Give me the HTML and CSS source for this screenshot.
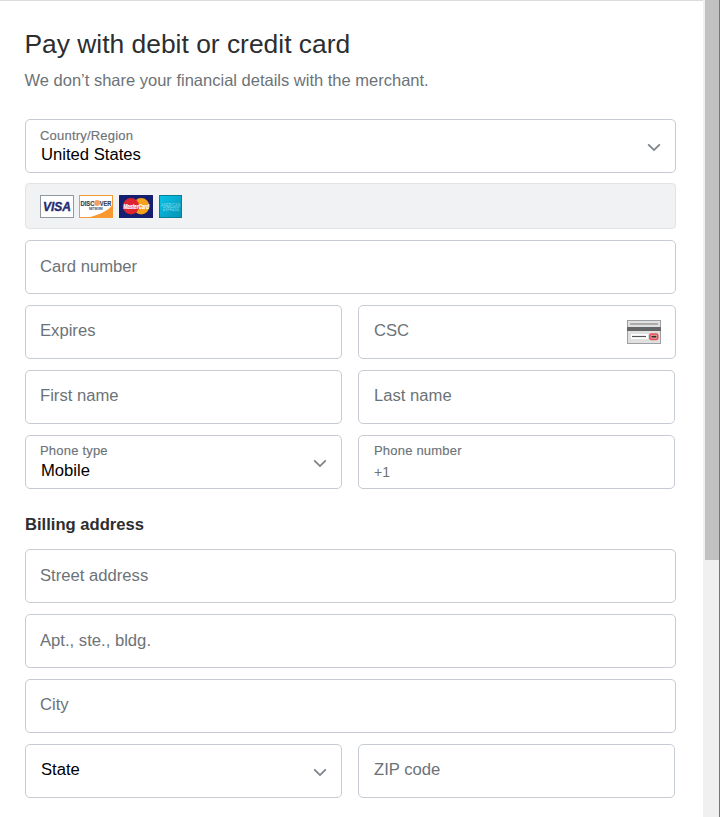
FILE: index.html
```html
<!DOCTYPE html>
<html lang="en">
<head>
<meta charset="utf-8">
<title>Pay with debit or credit card</title>
<link rel="stylesheet" href="styles.css">
</head>
<body>
<div class="window">
  <main class="page">
    <h1 class="title">Pay with debit or credit card</h1>
    <p class="subtitle">We don’t share your financial details with the merchant.</p>
    <form class="form">
      <div class="field select">
        <div class="stack"><span class="label">Country/Region</span><span class="value">United States</span></div>
        <svg class="chevron" viewBox="0 0 14 9"><path d="M1.2 1.3 7 7.1l5.8-5.8"/></svg>
      </div>
      <div class="brands">
        <svg class="card" width="34" height="23" viewBox="0 0 34 23">
          <rect x=".5" y=".5" width="33" height="22" fill="#fff" stroke="#9098a3"/>
          <text x="3" y="16" class="visa" textLength="28" lengthAdjust="spacingAndGlyphs">VISA</text>
        </svg>
        <svg class="card" width="34" height="23" viewBox="0 0 34 23">
          <rect x=".5" y=".5" width="33" height="22" fill="#fff" stroke="#f79a35"/>
          <path d="M34 9.500C29 16 20 20 9 22.500H34z" fill="#f9982f"/>
          <text x="1.500" y="11" class="discover" textLength="14" lengthAdjust="spacingAndGlyphs">DISC</text>
          <circle cx="18.100" cy="8" r="2.900" fill="#f4a064"/>
          <text x="20.700" y="11" class="discover" textLength="11.500" lengthAdjust="spacingAndGlyphs">VER</text>
          <text x="10" y="14.500" class="network" textLength="14" lengthAdjust="spacingAndGlyphs">NETWORK</text>
        </svg>
        <svg class="card spaced" width="34" height="23" viewBox="0 0 34 23">
          <rect width="34" height="23" rx=".5" fill="#161e70"/>
          <circle cx="22.200" cy="11.300" r="8.200" fill="#f6a11c"/>
          <circle cx="12" cy="11.300" r="8.200" fill="#dc2530"/>
          <text x="4.500" y="13.800" class="mastercard" textLength="25.500" lengthAdjust="spacingAndGlyphs">MasterCard</text>
        </svg>
        <svg class="card spaced" width="23" height="23" viewBox="0 0 23 23">
          <defs><linearGradient id="amex" x2="1" y2="1"><stop stop-color="#08c3e8"/><stop offset="1" stop-color="#0694b4"/></linearGradient></defs>
          <rect x=".5" y=".5" width="22" height="22" fill="url(#amex)" stroke="#087f99"/>
          <text x="2" y="11.500" class="amex" textLength="19" lengthAdjust="spacingAndGlyphs">AMERICAN</text>
          <text x="4" y="16" class="amex" textLength="16" lengthAdjust="spacingAndGlyphs">EXPRESS</text>
        </svg>
      </div>
      <div class="field low"><span class="hint">Card number</span></div>
      <div class="row wide">
        <div class="field"><span class="hint">Expires</span></div>
        <div class="field csc"><span class="hint">CSC</span>
          <svg width="34" height="24" viewBox="0 0 34 24">
            <rect x=".5" y=".5" width="33" height="23" fill="#e0e0e0" stroke="#9ba0a4"/>
            <path d="M3 4h28" stroke="#9a9a9a" stroke-width="1.500"/>
            <path d="M0 9h34" stroke="#656667" stroke-width="4"/>
            <path d="M4 16.500h17" stroke="#fff" stroke-width="5"/>
            <path d="M5 16.500h14" stroke="#555" stroke-width="1.200"/>
            <rect x="22.800" y="14" width="8" height="5.500" rx="1.500" fill="#d8a4a7" stroke="#ee4b52" stroke-width="1.500"/>
            <path d="M24.500 16.700h4.800" stroke="#35282b" stroke-width="1.600"/>
          </svg>
        </div>
      </div>
      <div class="row">
        <div class="field"><span class="hint">First name</span></div>
        <div class="field"><span class="hint">Last name</span></div>
      </div>
      <div class="row">
        <div class="field select phone">
          <div class="stack"><span class="label">Phone type</span><span class="value">Mobile</span></div>
          <svg class="chevron" viewBox="0 0 14 9"><path d="M1.2 1.3 7 7.1l5.8-5.8"/></svg>
        </div>
        <div class="field phone">
          <div class="stack"><span class="label">Phone number</span><span class="prefix">+1</span></div>
        </div>
      </div>
      <h2 class="section">Billing address</h2>
      <div class="field low"><span class="hint">Street address</span></div>
      <div class="field low"><span class="hint">Apt., ste., bldg.</span></div>
      <div class="field"><span class="hint">City</span></div>
      <div class="row">
        <div class="field select state"><span class="hint">State</span>
          <svg class="chevron" viewBox="0 0 14 9"><path d="M1.2 1.3 7 7.1l5.8-5.8"/></svg>
        </div>
        <div class="field"><span class="hint">ZIP code</span></div>
      </div>
    </form>
  </main>
  <div class="scrollbar"><div class="thumb"></div></div>
</div>
</body>
</html>
```
FILE: styles.css
```css
* { box-sizing: border-box; }
body {
  margin: 0;
  height: 817px;
  overflow: hidden;
  background: #fff;
  color: #2c2e2f;
  font: 16.65px/18px "Liberation Sans", Arial, sans-serif;
}
.window { display: flex; height: 817px; }
.page { width: 703px; padding: 27px 27px 0 25px; border-top: 1px solid #dcdcdc; }
.title { margin: 0 0 0 -.5px; font-size: 26.4px; line-height: 32px; font-weight: 400; white-space: nowrap; }
.subtitle { margin: 11px 0 30px -.5px; color: #6c7378; font-size: 16.5px; line-height: 18px; white-space: nowrap; }
.form { display: flex; flex-direction: column; gap: 11px; }
.field {
  display: flex;
  height: 54px;
  padding: 0 14px;
  border: 1px solid #c6cbd2;
  border-radius: 5px;
  background: #fff;
}
.row { display: grid; grid-template-columns: 317px 317px; gap: 16px; }
.row .field:last-child { padding-left: 15px; }
.wide { grid-template-columns: 317px 318px; }
.hint { padding-top: 16px; color: #6c7378; }
.low .hint { padding-top: 17px; }
.stack { display: flex; flex-direction: column; padding-top: 8px; }
.label { color: #6c7378; font-size: 13px; line-height: 16px; letter-spacing: .2px; -webkit-text-stroke: .15px #6c7378; }
.value { color: #000; padding-left: 1px; line-height: 20px; margin-top: 1px; }
.phone .stack { padding-top: 7px; }
.phone .value { margin-top: 2px; }
.prefix { color: #6c7378; font-size: 14px; line-height: 18px; margin-top: 4px; }
.select { justify-content: space-between; }
.chevron { width: 14px; height: 9px; margin: 23px -.4px 0 0; fill: none; stroke: #7d8388; stroke-width: 1.8; }
.state .hint { color: #000; padding-left: 1px; }
.brands {
  display: flex;
  gap: 5px;
  height: 46px;
  margin-top: -1px;
  padding: 11px 14px;
  border: 1px solid #e0e3e6;
  border-radius: 4px;
  background: #f1f2f4;
}
.card { flex: none; overflow: visible; }
.spaced { margin-left: 1px; }
.visa { font: italic bold 13px "Liberation Sans", sans-serif; fill: #242c72; stroke: #242c72; stroke-width: .4px; }
.discover { font: bold 8px "Liberation Sans", sans-serif; fill: #334252; stroke: #334252; stroke-width: .2px; }
.network { font: bold 3px "Liberation Sans", sans-serif; fill: #334252; }
.mastercard { font: italic bold 7px "Liberation Sans", sans-serif; fill: #fff; stroke: #fff; stroke-width: .2px; }
.amex { font: 5px "Liberation Sans", sans-serif; fill: #83dced; }
.csc { justify-content: space-between; }
.csc svg { margin-top: 14px; }
.section { margin: 15px 0 4px; font-size: 16.6px; line-height: 19px; font-weight: 700; }
.scrollbar { width: 17px; padding-left: 2px; background: #f0f0f0; border-right: 1px solid #777; }
.thumb { height: 560px; background: #c1c1c1; }
```
